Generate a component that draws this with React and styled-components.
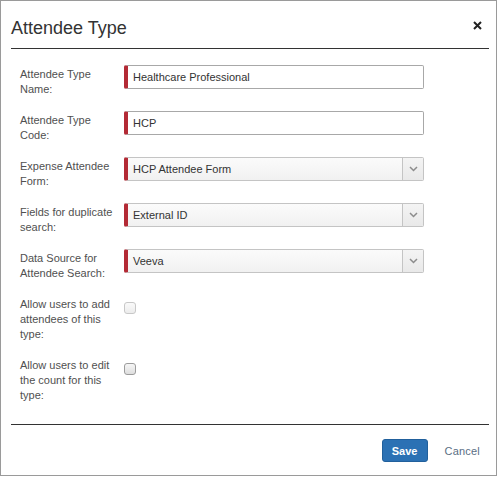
import React from "react";
import styled, { createGlobalStyle } from "styled-components";

const Global = createGlobalStyle`
  html, body { margin: 0; padding: 0; background: #fff; }
  * { box-sizing: border-box; }
`;

const Dialog = styled.div`
  width: 497px;
  height: 476px;
  border: 1px solid #9a9a9a;
  background: #fff;
  display: flex;
  flex-direction: column;
  font-family: "Liberation Sans", Arial, sans-serif;
`;

const Header = styled.div`
  display: flex;
  justify-content: space-between;
  margin: 0 7px 0 10px;
  padding: 17px 0 10px;
  border-bottom: 1px solid #333;
`;

const Title = styled.h1`
  margin: 0;
  font-size: 18px;
  line-height: 20px;
  font-weight: normal;
  color: #333;
`;

const Close = styled.button`
  align-self: flex-start;
  margin: 3px 7px 0 0;
  padding: 0;
  border: 0;
  background: none;
  width: 9px;
  height: 9px;
  display: flex;
  cursor: pointer;
`;

const Body = styled.div`
  flex: 1;
  padding: 16px 0 0 19px;
  display: flex;
  flex-direction: column;
  gap: 14px;
`;

const Row = styled.div`
  display: flex;
  align-items: flex-start;
`;

const Label = styled.label`
  width: 104px;
  flex: none;
  padding: 2px 8px 0 0;
  font-size: 11px;
  line-height: 15px;
  color: #505050;
`;

const Field = styled.div`
  width: 300px;
  height: 24px;
  display: flex;
  align-items: center;
  border: 1px solid #a8a8a8;
  border-left: 4px solid #b32a35;
  border-radius: 2px;
  background: ${(p) => (p.$select ? "linear-gradient(#fbfbfb, #f1f1f1)" : "#fff")};
  border-color: ${(p) => (p.$select ? "#c4c4c4" : "#a8a8a8")};
  border-left-color: #b32a35;
  font-size: 11px;
  color: #333;
  overflow: hidden;
`;

const Value = styled.span`
  flex: 1;
  padding-left: 5px;
`;

const Arrow = styled.span`
  width: 21px;
  height: 100%;
  border-left: 1px solid #c4c4c4;
  background: linear-gradient(#f4f4f4, #e9e9e9);
  display: flex;
  align-items: center;
  justify-content: center;
`;

const Check = styled.span`
  margin-top: 7px;
  width: 12px;
  height: 12px;
  border: 1px solid ${(p) => (p.$disabled ? "#c8c8c8" : "#9c9c9c")};
  border-radius: 3px;
  background: ${(p) =>
    p.$disabled ? "linear-gradient(#fafafa, #ececec)" : "linear-gradient(#f6f6f6, #dedede)"};
`;

const Footer = styled.div`
  margin: 0 7px 0 10px;
  padding: 14px 9px 13px 0;
  border-top: 1px solid #333;
  display: flex;
  justify-content: flex-end;
  align-items: center;
  gap: 17px;
`;

const SaveButton = styled.button`
  width: 46px;
  height: 23px;
  border: 1px solid #21609c;
  border-radius: 3px;
  background: #2b71b4;
  color: #fff;
  font-family: inherit;
  font-weight: bold;
  font-size: 11px;
  padding: 0;
`;

const CancelButton = styled.button`
  border: 0;
  background: none;
  padding: 0;
  font-family: inherit;
  font-size: 11px;
  color: #5a6e84;
  letter-spacing: 0.2px;
`;

const Chevron = () => (
  <svg width="9" height="6" viewBox="0 0 9 6">
    <path d="M1 1 L4.5 4.5 L8 1" fill="none" stroke="#8c8c8c" strokeWidth="1.5" />
  </svg>
);

const fields = [
  { label: "Attendee Type Name:", value: "Healthcare Professional" },
  { label: "Attendee Type Code:", value: "HCP" },
  { label: "Expense Attendee Form:", value: "HCP Attendee Form", select: true },
  { label: "Fields for duplicate search:", value: "External ID", select: true },
  { label: "Data Source for Attendee Search:", value: "Veeva", select: true },
];

const checks = [
  { label: "Allow users to add attendees of this type:", disabled: true },
  { label: "Allow users to edit the count for this type:", disabled: false },
];

export default function App() {
  return (
    <>
      <Global />
      <Dialog>
        <Header>
          <Title>Attendee Type</Title>
          <Close aria-label="Close">
            <svg width="9" height="9" viewBox="0 0 9 9">
              <path d="M1 1 L8 8 M8 1 L1 8" stroke="#222" strokeWidth="2" />
            </svg>
          </Close>
        </Header>
        <Body>
          {fields.map((f) => (
            <Row key={f.label}>
              <Label>{f.label}</Label>
              <Field $select={f.select}>
                <Value>{f.value}</Value>
                {f.select && (
                  <Arrow>
                    <Chevron />
                  </Arrow>
                )}
              </Field>
            </Row>
          ))}
          {checks.map((c) => (
            <Row key={c.label}>
              <Label>{c.label}</Label>
              <Check $disabled={c.disabled} />
            </Row>
          ))}
        </Body>
        <Footer>
          <SaveButton>Save</SaveButton>
          <CancelButton>Cancel</CancelButton>
        </Footer>
      </Dialog>
    </>
  );
}
